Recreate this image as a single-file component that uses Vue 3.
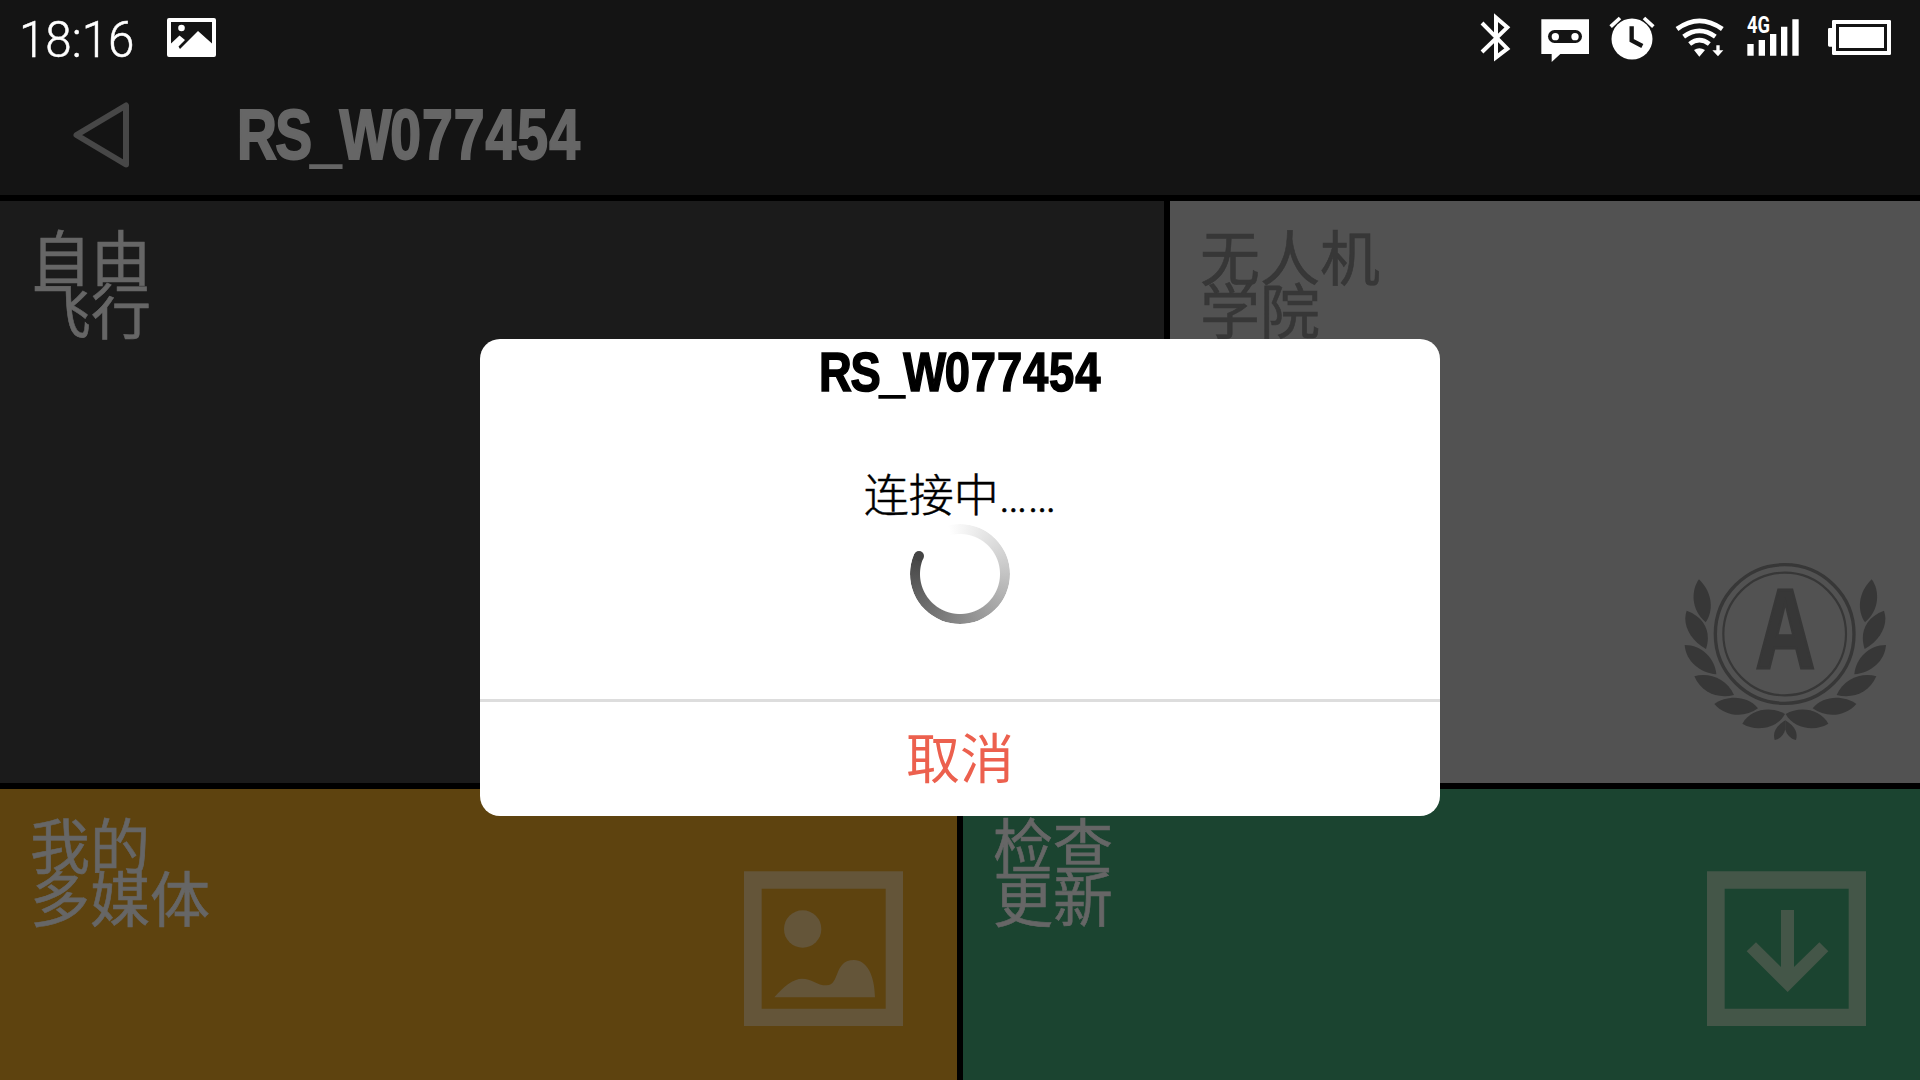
<script setup>
const leaves = [
  'M117 118C93 150 92 210 137 247C160 215 160 160 117 118Z',
  'M80 212C66 250 88 300 138 327C152 285 142 235 80 212Z',
  'M74 315C78 365 120 398 169 403C165 355 125 315 74 315Z',
  'M103 409C125 460 175 477 222 465C200 415 145 396 103 409Z',
  'M163 492C195 530 255 535 294 505C262 465 200 465 163 492Z',
  'M247 551C285 575 350 568 375 522C335 498 272 505 247 551Z',
  'M376 541C345 560 338 580 344 600C360 597 372 585 376 568Z',
]
</script>

<template>
  <div class="screen">
    <header class="top">
      <div class="status">
        <span class="time"><span>18:16</span></span>
        <svg class="shot" width="49" height="39" viewBox="0 0 49 39">
          <path fill="#fff" fill-rule="evenodd" d="M2 0H47Q49 0 49 2V37Q49 39 47 39H2Q0 39 0 37V2Q0 0 2 0ZM4 4V25.500L12.500 17.500L18 22L11.500 28.500L13 31L31 13L45 25.500V4Z" />
          <ellipse cx="14.500" cy="10" rx="3.300" ry="3.300" fill="#fff" />
        </svg>
        <div class="sys">
          <svg class="bt" width="31" height="50" viewBox="60 39 93 150">
            <path d="M66 69L142 146L108 172V53L142 82L66 156" fill="none" stroke="#fff" stroke-width="12" />
          </svg>
          <svg class="msg" width="48" height="50" viewBox="243 39 144 150">
            <path fill="#fff" d="M244 58H387V162H301L275 186V162H244Z" />
            <rect x="264" y="90" width="102" height="39" rx="19.500" fill="#141414" />
            <circle cx="286" cy="110" r="11" fill="#fff" />
            <circle cx="345" cy="110" r="11" fill="#fff" />
          </svg>
          <svg class="alarm" width="46" height="50" viewBox="447 39 138 150">
            <circle cx="516" cy="117" r="61.500" fill="#fff" />
            <path d="M452 80L480 54M552 54L580 80" stroke="#fff" stroke-width="11" />
            <path d="M515 79V121L547 138" fill="none" stroke="#141414" stroke-width="13" />
          </svg>
          <svg class="wifi" width="50" height="50" viewBox="645 39 150 150">
            <g fill="none" stroke="#fff" stroke-width="14">
              <path d="M651 87Q718 38 787 87" />
              <path d="M671 110Q718 75 766 110" />
              <path d="M689 132Q718 109 748 132" />
            </g>
            <path fill="#fff" d="M702 150Q718 139 735 150L718 170ZM769 136H779V151H790L774 169L757 151H769Z" />
          </svg>
          <svg class="signal" width="52" height="50" viewBox="861 39 156 150">
            <path fill="#fff" d="M862 132H881V167H862ZM896 120H915V167H896ZM930 102H949V167H930ZM963 80H982V167H963ZM997 58H1016V167H997Z" />
            <text class="net" x="861" y="100" textLength="69" lengthAdjust="spacingAndGlyphs">4G</text>
          </svg>
          <svg class="battery" width="64" height="50" viewBox="1101 39 192 150">
            <path fill="#fff" fill-rule="evenodd" d="M1120 60H1289Q1293 60 1293 64V161Q1293 165 1289 165H1120Q1116 165 1116 161V140H1108Q1104 140 1104 136V88Q1104 84 1108 84H1116V64Q1116 60 1120 60ZM1128 72V153H1281V72Z" />
            <rect x="1137" y="81" width="135" height="63" fill="#fff" />
          </svg>
        </div>
      </div>
      <div class="nav">
        <svg class="back" width="56" height="66" viewBox="0 0 56 66">
          <path d="M53 3.500V62.500L3.500 33Z" fill="none" stroke="#474747" stroke-width="6" stroke-linejoin="round" />
        </svg>
        <h1 class="name"><span class="ssid"><span class="tight">RS_W</span>077454</span></h1>
      </div>
    </header>

    <div class="row first">
      <section class="tile fly"><h2>自由<br>飞行</h2></section>
      <section class="tile academy">
        <h2>无人机<br>学院</h2>
        <svg class="laurel" width="202" height="177" viewBox="72 69 606 531">
          <g fill="#373737">
            <path v-for="d in leaves" :key="d" :d="d" />
            <g transform="translate(752 0) scale(-1 1)">
              <path v-for="d in leaves" :key="d" :d="d" />
            </g>
            <text class="letter" transform="translate(375.500 385) scale(.73 1)" text-anchor="middle">A</text>
          </g>
          <g fill="none" stroke="#373737">
            <circle cx="374" cy="282" r="208" stroke-width="10" />
            <circle cx="374" cy="282" r="184" stroke-width="6.500" />
          </g>
        </svg>
      </section>
    </div>

    <div class="row second">
      <section class="tile media">
        <h2>我的<br>多媒体</h2>
        <svg class="square" width="159" height="155" viewBox="72 63 477 465">
          <g fill="#645539">
            <path fill-rule="evenodd" d="M72 64H549V528H72ZM125 116V476H497V116Z" />
            <circle cx="248" cy="237" r="56" />
            <path d="M163 442C190 410 220 386 246 386C275 386 290 406 320 406C361 406 340 330 402 330C440 330 464 375 465 442Z" />
          </g>
        </svg>
      </section>
      <section class="tile update">
        <h2>检查<br>更新</h2>
        <svg class="square" width="159" height="155" viewBox="51 63 477 465">
          <g fill="#445648">
            <path fill-rule="evenodd" d="M51 64H528V528H51ZM104 116V476H476V116Z" />
            <path d="M273 180H312V351L388 277L415 304L293 426L170 304L198 277L273 351Z" />
          </g>
        </svg>
      </section>
    </div>

    <div class="dialog">
      <div class="body">
        <div class="title"><span class="ssid"><span class="tight">RS_W</span>077454</span></div>
        <div class="message">连接中<span class="dots">……</span></div>
        <div class="spinner"><i class="ring"></i><i class="head"></i></div>
      </div>
      <button class="cancel">取消</button>
    </div>
  </div>
</template>

<style>
body {
  margin: 0;
  background: #000;
}
</style>

<style scoped>
.screen {
  position: relative;
  width: 1920px;
  height: 1080px;
  overflow: hidden;
  display: flex;
  flex-direction: column;
  gap: 6px;
  background: #000;
  font-family: "Noto Sans CJK SC", sans-serif;
}
.top {
  height: 195px;
  background: #141414;
}
.status {
  display: flex;
  align-items: flex-start;
  height: 77px;
  padding: 0 29px 0 19px;
}
.time {
  width: 148px;
  padding-top: 11px;
  font: 300 50px/58px Roboto, sans-serif;
  color: #fff;
  -webkit-text-stroke: .5px #fff;
}
.time span {
  display: inline-block;
  transform: scaleX(.95);
  transform-origin: left;
}
.shot {
  margin-top: 18px;
}
.sys {
  display: flex;
  margin: 13px 0 0 auto;
}
.msg {
  margin-left: 30px;
}
.alarm,
.wifi {
  margin-left: 20px;
}
.signal {
  margin-left: 22px;
}
.battery {
  margin-left: 28px;
}
.net {
  font: 700 70px Roboto, sans-serif;
  fill: #fff;
}
.nav {
  display: flex;
  align-items: flex-start;
  padding: 25px 0 0 73px;
}
.name {
  margin: -7px 0 0 108px;
  font: 700 70px/80px "Liberation Sans", sans-serif;
  color: #666;
}
.ssid {
  display: inline-block;
  letter-spacing: .019em;
}
.tight {
  letter-spacing: -.03em;
}
.name .ssid {
  transform: scaleX(.79);
  transform-origin: left;
  -webkit-text-stroke: 2px #666;
}
.row {
  display: flex;
  gap: 6px;
}
.first {
  height: 582px;
}
.second {
  height: 291px;
}
.tile {
  box-sizing: border-box;
  display: flex;
  justify-content: space-between;
  align-items: flex-end;
  padding: 27px 30px 0;
  color: #666;
}
.tile h2 {
  align-self: flex-start;
  margin: 0;
  font-size: 60px;
  line-height: 53px;
  font-weight: 400;
  -webkit-text-stroke: .6px currentColor;
}
.fly {
  width: 1164px;
  padding-left: 31px;
  background: #1b1b1b;
}
.academy {
  width: 750px;
  padding-right: 34px;
  color: #373737;
  background: #525252;
}
.laurel {
  margin-bottom: 43px;
}
.letter {
  font: 700 339px "Liberation Sans", sans-serif;
  stroke: #373737;
  stroke-width: 9px;
}
.media {
  width: 957px;
  padding-right: 54px;
  background: #5e430f;
}
.update {
  width: 957px;
  padding-right: 54px;
  background: #1b4430;
}
.square {
  margin-bottom: 54px;
}
.dialog {
  position: absolute;
  left: 480px;
  top: 339px;
  width: 960px;
  height: 477px;
  display: flex;
  flex-direction: column;
  border-radius: 20px;
  overflow: hidden;
  background: #fff;
}
.body {
  height: 360px;
  display: flex;
  flex-direction: column;
  align-items: center;
  border-bottom: 3px solid #ddd;
}
.title {
  height: 66px;
  font: 700 56px/66px "Liberation Sans", sans-serif;
  color: #000;
}
.title .ssid {
  transform: scaleX(.81);
  -webkit-text-stroke: 1.6px #000;
}
.message {
  margin-top: 56px;
  height: 63px;
  font-size: 45px;
  line-height: 63px;
  font-weight: 300;
  color: #000;
  white-space: nowrap;
  -webkit-text-stroke: .5px #000;
}
.dots {
  font-family: Roboto, sans-serif;
}
.spinner {
  position: relative;
  width: 100px;
  height: 100px;
}
.ring {
  position: absolute;
  inset: 0;
  border-radius: 50%;
  background: conic-gradient(from -14deg, #fff, #ccc 90deg, #888 195deg, #444 308deg, transparent 308deg);
  mask: radial-gradient(circle, transparent 39.500px, #000 40.500px);
}
.head {
  position: absolute;
  left: 4px;
  top: 27px;
  width: 10px;
  height: 10px;
  border-radius: 50%;
  background: #444;
}
.cancel {
  flex: 1;
  border: 0;
  padding: 0 0 6px;
  background: none;
  font: 400 54px/108px "Noto Sans CJK SC", sans-serif;
  color: #ec604e;
}
</style>
